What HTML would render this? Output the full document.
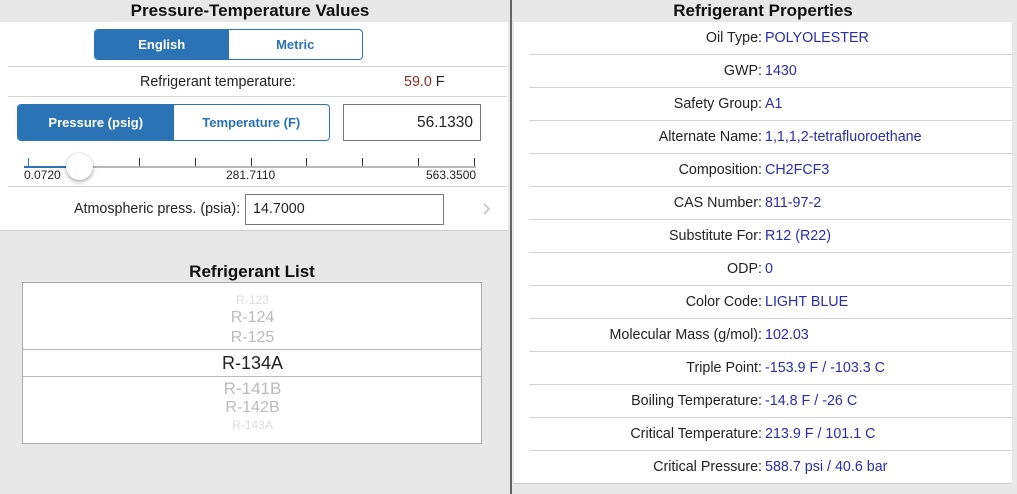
<!DOCTYPE html>
<html><head><style>
*{margin:0;padding:0;box-sizing:border-box}
body{width:1017px;height:494px;background:#e8e8e8;font-family:"Liberation Sans",sans-serif;position:relative;overflow:hidden;color:#222}
.a{position:absolute}
.t{font-size:17px;font-weight:bold;color:#111;text-align:center}
.seg{position:absolute;border:1px solid #2a73b5;border-radius:4px;display:flex;overflow:hidden;background:#fff}
.seg div{flex:1;display:flex;align-items:center;justify-content:center;font-size:13px;font-weight:bold;color:#2a73b5}
.seg .on{background:#2a73b5;color:#fff}
.hl{position:absolute;height:1px;background:#d4d4d4}
.row{position:absolute;left:514px;width:498px;height:33px;font-size:14.3px;line-height:33px;color:#222}
.row .l{position:absolute;right:250px;text-align:right;white-space:nowrap}
.row .v{position:absolute;left:251px;color:#2b2bb0;white-space:nowrap}
.tick{position:absolute;width:1px;height:8px;background:#333;top:158px}
.p{position:absolute;left:0;width:459px;text-align:center;font-size:16px}
</style></head><body>
<div class="a t" style="left:0;width:500px;top:1px">Pressure-Temperature Values</div>
<div class="a" style="left:0;top:22px;width:508px;height:209px;background:#fff;border-bottom:1px solid #d0d0d0"></div>
<div class="seg" style="left:94px;top:29px;width:269px;height:31px"><div class="on">English</div><div>Metric</div></div>
<div class="hl" style="left:8px;top:66px;width:499px"></div>
<div class="a" style="left:140px;top:74px;font-size:14.3px">Refrigerant temperature:</div>
<div class="a" style="left:404px;top:74px;font-size:14.3px"><span style="color:#8a2a2a">59.0</span> F</div>
<div class="hl" style="left:8px;top:96px;width:499px"></div>
<div class="seg" style="left:17px;top:104px;width:313px;height:37px"><div class="on">Pressure (psig)</div><div>Temperature (F)</div></div>
<div class="a" style="left:343px;top:104px;width:138px;height:37px;border:1px solid #777;font-size:15.5px;text-align:right;padding-right:7px;line-height:35px">56.1330</div>
<div class="a" style="left:24px;top:166px;width:452px;height:2px;background:#b8b8b8"></div>
<div class="a" style="left:24px;top:166px;width:55px;height:2px;background:#2a73b5"></div>
<div class="tick" style="left:28px;background:#2a73b5"></div>
<div class="tick" style="left:139px"></div><div class="tick" style="left:195px"></div><div class="tick" style="left:251px"></div><div class="tick" style="left:306px"></div><div class="tick" style="left:362px"></div><div class="tick" style="left:418px"></div><div class="tick" style="left:474px"></div>
<div class="a" style="left:66px;top:153px;width:27px;height:27px;border-radius:50%;background:#fff;box-shadow:0 2px 4px rgba(0,0,0,.3),0 0 1px rgba(0,0,0,.3)"></div>
<div class="a" style="left:24px;top:168px;font-size:12px">0.0720</div>
<div class="a" style="left:226px;top:168px;font-size:12px">281.7110</div>
<div class="a" style="left:426px;top:168px;font-size:12px">563.3500</div>
<div class="hl" style="left:8px;top:186px;width:499px"></div>
<div class="a" style="left:74px;top:201px;font-size:14.3px">Atmospheric press. (psia):</div>
<div class="a" style="left:245px;top:194px;width:199px;height:31px;border:1px solid #777;font-size:14.3px;line-height:29px;padding-left:7px">14.7000</div>
<svg class="a" style="left:482px;top:202px" width="10" height="14"><path d="M2 2 L7 7 L2 12" fill="none" stroke="#c4c4c4" stroke-width="1.6"/></svg>
<div class="a t" style="left:22px;width:460px;top:262px">Refrigerant List</div>
<div class="a" style="left:22px;top:282px;width:460px;height:162px;background:#fff;border:1px solid #aaa;overflow:hidden">
<div class="p" style="top:10px;font-size:12px;color:#ddd">R-123</div>
<div class="p" style="top:26px;color:#bbb;font-size:16px">R-124</div>
<div class="p" style="top:46px;color:#bbb;font-size:16px">R-125</div>
<div class="a" style="left:0;top:66px;width:459px;height:1px;background:#bbb"></div>
<div class="p" style="top:70px;font-size:18px;color:#222">R-134A</div>
<div class="a" style="left:0;top:93px;width:459px;height:1px;background:#bbb"></div>
<div class="p" style="top:96px;font-size:17px;color:#bbb">R-141B</div>
<div class="p" style="top:116px;color:#bbb">R-142B</div>
<div class="p" style="top:135px;font-size:12px;color:#ddd">R-143A</div>
</div>
<div class="a" style="left:510px;top:0;width:2px;height:494px;background:#666"></div>
<div class="a t" style="left:514px;width:498px;top:1px">Refrigerant Properties</div>
<div class="a" style="left:514px;top:22px;width:498px;height:462px;background:#fff;border-bottom:1px solid #ccc"></div>
<div class="row" style="top:22px"><span class="l">Oil Type:</span><span class="v">POLYOLESTER</span></div>
<div class="row" style="top:55px"><span class="l">GWP:</span><span class="v">1430</span></div>
<div class="row" style="top:88px"><span class="l">Safety Group:</span><span class="v">A1</span></div>
<div class="row" style="top:121px"><span class="l">Alternate Name:</span><span class="v">1,1,1,2-tetrafluoroethane</span></div>
<div class="row" style="top:154px"><span class="l">Composition:</span><span class="v">CH2FCF3</span></div>
<div class="row" style="top:187px"><span class="l">CAS Number:</span><span class="v">811-97-2</span></div>
<div class="row" style="top:220px"><span class="l">Substitute For:</span><span class="v">R12 (R22)</span></div>
<div class="row" style="top:253px"><span class="l">ODP:</span><span class="v">0</span></div>
<div class="row" style="top:286px"><span class="l">Color Code:</span><span class="v">LIGHT BLUE</span></div>
<div class="row" style="top:319px"><span class="l">Molecular Mass (g/mol):</span><span class="v">102.03</span></div>
<div class="row" style="top:352px"><span class="l">Triple Point:</span><span class="v">-153.9 F / -103.3 C</span></div>
<div class="row" style="top:385px"><span class="l">Boiling Temperature:</span><span class="v">-14.8 F / -26 C</span></div>
<div class="row" style="top:418px"><span class="l">Critical Temperature:</span><span class="v">213.9 F / 101.1 C</span></div>
<div class="row" style="top:451px"><span class="l">Critical Pressure:</span><span class="v">588.7 psi / 40.6 bar</span></div>
<div class="hl" style="left:529px;top:54px;width:483px"></div>
<div class="hl" style="left:529px;top:87px;width:483px"></div>
<div class="hl" style="left:529px;top:120px;width:483px"></div>
<div class="hl" style="left:529px;top:153px;width:483px"></div>
<div class="hl" style="left:529px;top:186px;width:483px"></div>
<div class="hl" style="left:529px;top:219px;width:483px"></div>
<div class="hl" style="left:529px;top:252px;width:483px"></div>
<div class="hl" style="left:529px;top:285px;width:483px"></div>
<div class="hl" style="left:529px;top:318px;width:483px"></div>
<div class="hl" style="left:529px;top:351px;width:483px"></div>
<div class="hl" style="left:529px;top:384px;width:483px"></div>
<div class="hl" style="left:529px;top:417px;width:483px"></div>
<div class="hl" style="left:529px;top:450px;width:483px"></div>
</body></html>
